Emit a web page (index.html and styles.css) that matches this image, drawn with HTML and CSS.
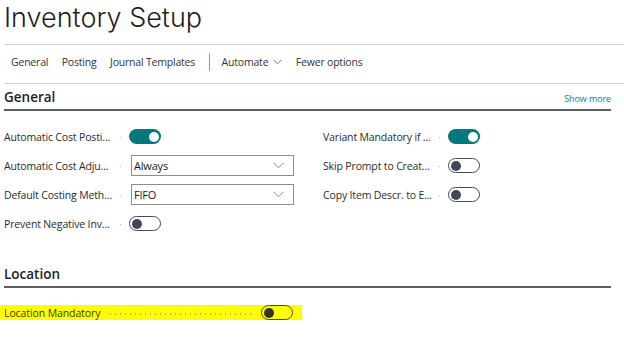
FILE: index.html
```html
<!DOCTYPE html>
<html>
<head>
<meta charset="utf-8">
<link rel="stylesheet" href="styles.css">
</head>
<body>
<div class="title">Inventory Setup</div>
<nav class="nav">
  <span class="nav-item">General</span>
  <span class="nav-item">Posting</span>
  <span class="nav-item">Journal Templates</span>
  <span class="nav-sep"></span>
  <span class="nav-item">Automate <svg class="chev-sm" width="9" height="6" viewBox="0 0 9 6"><path d="M0.5 0.8 L4.5 4.8 L8.5 0.8" fill="none" stroke="#777" stroke-width="1"/></svg></span>
  <span class="nav-item">Fewer options</span>
</nav>

<section class="section general">
  <div class="sec-head">
    <span class="sec-title">General</span>
    <span class="show-more">Show more</span>
  </div>
  <div class="fields">
    <div class="col">
      <div class="row"><span class="label">Automatic Cost Posti...</span><span class="dot">·</span><span class="toggle on"><span class="knob"></span></span></div>
      <div class="row"><span class="label">Automatic Cost Adju...</span><span class="dot">·</span><span class="select">Always<svg class="chev" width="11" height="7" viewBox="0 0 11 7"><path d="M0.5 0.8 L5.5 5.8 L10.5 0.8" fill="none" stroke="#888" stroke-width="1"/></svg></span></div>
      <div class="row"><span class="label">Default Costing Meth...</span><span class="dot">·</span><span class="select">FIFO<svg class="chev" width="11" height="7" viewBox="0 0 11 7"><path d="M0.5 0.8 L5.5 5.8 L10.5 0.8" fill="none" stroke="#888" stroke-width="1"/></svg></span></div>
      <div class="row"><span class="label">Prevent Negative Inv...</span><span class="dot">·</span><span class="toggle off"><span class="knob"></span></span></div>
    </div>
    <div class="col right">
      <div class="row"><span class="label">Variant Mandatory if ...</span><span class="dot">·</span><span class="toggle on"><span class="knob"></span></span></div>
      <div class="row"><span class="label">Skip Prompt to Creat...</span><span class="dot">·</span><span class="toggle off"><span class="knob"></span></span></div>
      <div class="row"><span class="label">Copy Item Descr. to E...</span><span class="dot">·</span><span class="toggle off"><span class="knob"></span></span></div>
    </div>
  </div>
</section>

<section class="section location">
  <div class="sec-head">
    <span class="sec-title">Location</span>
  </div>
  <div class="loc-row">
    <span class="loc-label">Location Mandatory</span>
    <span class="leader"></span>
    <span class="toggle off hl"><span class="knob"></span></span>
  </div>
</section>
</body>
</html>
```

FILE: styles.css
```css
html, body {
  margin: 0;
  padding: 0;
  background: #fff;
}
body {
  width: 624px;
  height: 345px;
  overflow: hidden;
  font-family: "Open Sans", "Noto Sans", sans-serif;
  color: #262626;
}
.title {
  height: 44px;
  box-sizing: border-box;
  padding: 1px 0 0 4px;
  font-family: "Inter", "Open Sans", sans-serif;
  font-size: 27px;
  font-weight: 300;
  line-height: 33px;
  color: #1f1f1f;
}
.nav {
  margin-left: 5px;
  height: 40px;
  box-sizing: border-box;
  border-top: 1px solid #cfcfcf;
  border-bottom: 1px solid #cfcfcf;
  display: flex;
  align-items: center;
  padding: 0 0 5px 6px;
  font-size: 10.5px;
  color: #333;
  letter-spacing: -0.2px;
}
.nav-item {
  margin-right: 13.5px;
  display: flex;
  align-items: center;
  white-space: nowrap;
}
.chev-sm {
  margin-left: 5px;
}
.nav-sep {
  width: 1px;
  height: 18px;
  background: #9a9a9a;
  margin-right: 12px;
}
.section {
  margin-left: 4px;
  width: 607px;
}
.sec-head {
  display: flex;
  align-items: flex-end;
  justify-content: space-between;
  height: 25px;
  border-bottom: 2px solid #5a6068;
}
.sec-title {
  font-size: 13.5px;
  font-weight: 600;
  color: #222;
  line-height: 20px;
  padding-bottom: 2px;
}
.show-more {
  font-size: 9px;
  color: #1b7a80;
  line-height: 16px;
  padding-bottom: 2px;
  letter-spacing: -0.1px;
}
.fields {
  display: flex;
  padding-top: 11px;
}
.col {
  width: 319px;
  flex-shrink: 0;
  display: flex;
  flex-direction: column;
}
.col.right {
  width: 288px;
}
.row {
  height: 29px;
  display: flex;
  align-items: center;
}
.label {
  width: 115px;
  font-size: 10.5px;
  white-space: nowrap;
  overflow: hidden;
  color: #2b2b2b;
  letter-spacing: -0.15px;
}
.dot {
  width: 10px;
  color: #b5b5b5;
  font-size: 10px;
  text-align: left;
}
.toggle {
  width: 32px;
  height: 15px;
  box-sizing: border-box;
  border-radius: 8px;
  display: flex;
  align-items: center;
  padding: 0 2px;
}
.toggle.on {
  background: #00787c;
  justify-content: flex-end;
}
.toggle.on .knob {
  background: #fff;
}
.toggle.off {
  border: 1.5px solid #434b57;
  background: #fff;
  justify-content: flex-start;
  padding: 0 1.5px;
}
.toggle.off .knob {
  background: #404857;
}
.knob {
  width: 10px;
  height: 10px;
  border-radius: 50%;
}
.select {
  width: 163px;
  height: 21px;
  box-sizing: border-box;
  border: 1px solid #8c8c8c;
  display: flex;
  align-items: center;
  justify-content: space-between;
  padding: 0 9px 0 2px;
  font-size: 11px;
  color: #1a1a1a;
  margin-left: 2px;
  letter-spacing: -0.2px;
}
.location {
  margin-top: 24px;
}
.location .sec-head {
  height: 24px;
}
.loc-row {
  margin-top: 17px;
  margin-left: -4px;
  width: 302px;
  height: 15px;
  background: #ffff00;
  display: flex;
  align-items: center;
  padding-left: 4px;
  box-sizing: border-box;
}
.loc-label {
  font-size: 10.5px;
  color: #3a3a00;
  white-space: nowrap;
  letter-spacing: -0.1px;
}
.leader {
  flex: 1;
  height: 2px;
  margin: 2px 6px 0 8px;
  background-image: radial-gradient(circle, #b0b060 0.6px, transparent 1px);
  background-size: 5px 2px;
  background-repeat: repeat-x;
  align-self: center;
}
.toggle.hl {
  background: #ffff00;
  border-color: #4a4a2a;
  margin-right: 9px;
}
.toggle.hl .knob {
  background: #363616;
}
```
